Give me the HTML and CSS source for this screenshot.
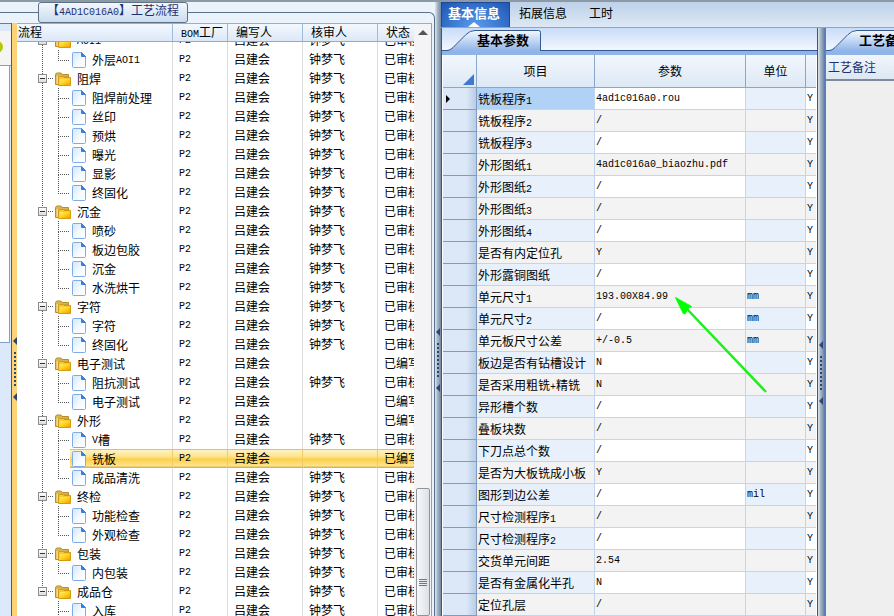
FILE: index.html
```html
<!DOCTYPE html>
<html lang="zh-CN">
<head>
    <meta charset="UTF-8">
    <meta name="viewport" content="width=device-width, initial-scale=1.0">
    <title>工艺流程</title>
    <link rel="stylesheet" href="styles.css">
</head>
<body>

<!-- 图标定义 -->
<svg class="defs" width="0" height="0" aria-hidden="true">
    <defs>
        <linearGradient id="gold" x1="0" y1="0" x2="1" y2="1">
            <stop offset="0" stop-color="#fff07a"/>
            <stop offset="0.5" stop-color="#ffd21e"/>
            <stop offset="1" stop-color="#f0a000"/>
        </linearGradient>
        <linearGradient id="paper" x1="0" y1="0" x2="1" y2="1">
            <stop offset="0" stop-color="#d3e6fb"/>
            <stop offset="0.6" stop-color="#f6fbff"/>
            <stop offset="1" stop-color="#ffffff"/>
        </linearGradient>
        <linearGradient id="tabfill" x1="0" y1="0" x2="0" y2="1">
            <stop offset="0" stop-color="#f4f8fe"/>
            <stop offset="0.45" stop-color="#c6daf6"/>
            <stop offset="1" stop-color="#8fb4e8"/>
        </linearGradient>
        <symbol id="folder" viewBox="0 0 16 14">
            <path d="M0.5 12.5V2.5L1.5 1H6l1 1.5h6.5V5H3.500V12.500z" fill="#d9b64c" stroke="#b88d2c"/>
            <path d="M1.500 4H3V12H1.500z" fill="#eddb9b"/>
            <path d="M3.500 13.500V5.500L4.500 4.500H8L9 5.500H15.500V13.500z" fill="#f7c92e" stroke="#d59a13"/>
            <path d="M5 7H15V13H4z" fill="url(#gold)"/>
        </symbol>
        <symbol id="file" viewBox="0 0 14 16">
            <path d="M0.500 1.500Q0.500 0.500 1.500 0.500H9.500L13.500 4.500V14.500Q13.500 15.500 12.500 15.500H1.500Q0.500 15.500 0.500 14.500z" fill="url(#paper)" stroke="#7fabe6"/>
            <path d="M9.500 0.500V4.500H13.500z" fill="#3d7fd8" stroke="#3d7fd8"/>
        </symbol>
    </defs>
</svg>

<div class="app">

    <!-- 左侧：工艺流程 -->
    <fieldset class="flow">
        <legend>【<span class="en">4AD1C016A0</span>】工艺流程</legend>
        <div class="flow-body">
            <div class="side">
                <div class="side-head"><i class="dot"></i></div>
                <div class="side-page"></div>
            </div>
            <div class="bar gold"><i class="arrow"></i><i class="grip"></i><i class="arrow"></i></div>

            <div class="tree">
                <table class="tree-head">
                    <colgroup><col class="c1"><col class="c2"><col class="c3"><col class="c3"><col></colgroup>
                    <thead>
                        <tr><th class="first">流程</th><th><span class="en">BOM</span>工厂</th><th>编写人</th><th>核审人</th><th>状态</th></tr>
                    </thead>
                </table>
                <div class="tree-view">
                    <div class="tree-rows">
                        <table class="tree-table">
                            <colgroup><col class="c1"><col class="c2"><col class="c3"><col class="c3"><col></colgroup>
                            <tbody>
                                <tr><td><div class="node group"><button class="toggle" aria-label="折叠"></button><svg class="folder"><use href="#folder"/></svg><span class="en">AOI1</span></div></td><td class="en">P2</td><td>吕建会</td><td>钟梦飞</td><td>已审核</td></tr>
                                <tr><td><div class="node"><i class="branch last"></i><span class="leaf"><svg class="file"><use href="#file"/></svg>外层<span class="en">AOI1</span></span></div></td><td class="en">P2</td><td>吕建会</td><td>钟梦飞</td><td>已审核</td></tr>
                                <tr><td><div class="node group"><button class="toggle" aria-label="折叠"></button><svg class="folder"><use href="#folder"/></svg>阻焊</div></td><td class="en">P2</td><td>吕建会</td><td>钟梦飞</td><td>已审核</td></tr>
                                <tr><td><div class="node"><i class="branch"></i><span class="leaf"><svg class="file"><use href="#file"/></svg>阻焊前处理</span></div></td><td class="en">P2</td><td>吕建会</td><td>钟梦飞</td><td>已审核</td></tr>
                                <tr><td><div class="node"><i class="branch"></i><span class="leaf"><svg class="file"><use href="#file"/></svg>丝印</span></div></td><td class="en">P2</td><td>吕建会</td><td>钟梦飞</td><td>已审核</td></tr>
                                <tr><td><div class="node"><i class="branch"></i><span class="leaf"><svg class="file"><use href="#file"/></svg>预烘</span></div></td><td class="en">P2</td><td>吕建会</td><td>钟梦飞</td><td>已审核</td></tr>
                                <tr><td><div class="node"><i class="branch"></i><span class="leaf"><svg class="file"><use href="#file"/></svg>曝光</span></div></td><td class="en">P2</td><td>吕建会</td><td>钟梦飞</td><td>已审核</td></tr>
                                <tr><td><div class="node"><i class="branch"></i><span class="leaf"><svg class="file"><use href="#file"/></svg>显影</span></div></td><td class="en">P2</td><td>吕建会</td><td>钟梦飞</td><td>已审核</td></tr>
                                <tr><td><div class="node"><i class="branch last"></i><span class="leaf"><svg class="file"><use href="#file"/></svg>终固化</span></div></td><td class="en">P2</td><td>吕建会</td><td>钟梦飞</td><td>已审核</td></tr>
                                <tr><td><div class="node group"><button class="toggle" aria-label="折叠"></button><svg class="folder"><use href="#folder"/></svg>沉金</div></td><td class="en">P2</td><td>吕建会</td><td>钟梦飞</td><td>已审核</td></tr>
                                <tr><td><div class="node"><i class="branch"></i><span class="leaf"><svg class="file"><use href="#file"/></svg>喷砂</span></div></td><td class="en">P2</td><td>吕建会</td><td>钟梦飞</td><td>已审核</td></tr>
                                <tr><td><div class="node"><i class="branch"></i><span class="leaf"><svg class="file"><use href="#file"/></svg>板边包胶</span></div></td><td class="en">P2</td><td>吕建会</td><td>钟梦飞</td><td>已审核</td></tr>
                                <tr><td><div class="node"><i class="branch"></i><span class="leaf"><svg class="file"><use href="#file"/></svg>沉金</span></div></td><td class="en">P2</td><td>吕建会</td><td>钟梦飞</td><td>已审核</td></tr>
                                <tr><td><div class="node"><i class="branch last"></i><span class="leaf"><svg class="file"><use href="#file"/></svg>水洗烘干</span></div></td><td class="en">P2</td><td>吕建会</td><td>钟梦飞</td><td>已审核</td></tr>
                                <tr><td><div class="node group"><button class="toggle" aria-label="折叠"></button><svg class="folder"><use href="#folder"/></svg>字符</div></td><td class="en">P2</td><td>吕建会</td><td>钟梦飞</td><td>已审核</td></tr>
                                <tr><td><div class="node"><i class="branch"></i><span class="leaf"><svg class="file"><use href="#file"/></svg>字符</span></div></td><td class="en">P2</td><td>吕建会</td><td>钟梦飞</td><td>已审核</td></tr>
                                <tr><td><div class="node"><i class="branch last"></i><span class="leaf"><svg class="file"><use href="#file"/></svg>终固化</span></div></td><td class="en">P2</td><td>吕建会</td><td>钟梦飞</td><td>已审核</td></tr>
                                <tr><td><div class="node group"><button class="toggle" aria-label="折叠"></button><svg class="folder"><use href="#folder"/></svg>电子测试</div></td><td class="en">P2</td><td>吕建会</td><td></td><td>已编写</td></tr>
                                <tr><td><div class="node"><i class="branch"></i><span class="leaf"><svg class="file"><use href="#file"/></svg>阻抗测试</span></div></td><td class="en">P2</td><td>吕建会</td><td>钟梦飞</td><td>已审核</td></tr>
                                <tr><td><div class="node"><i class="branch last"></i><span class="leaf"><svg class="file"><use href="#file"/></svg>电子测试</span></div></td><td class="en">P2</td><td>吕建会</td><td></td><td>已编写</td></tr>
                                <tr><td><div class="node group"><button class="toggle" aria-label="折叠"></button><svg class="folder"><use href="#folder"/></svg>外形</div></td><td class="en">P2</td><td>吕建会</td><td></td><td>已编写</td></tr>
                                <tr><td><div class="node"><i class="branch"></i><span class="leaf"><svg class="file"><use href="#file"/></svg><span class="en">V</span>槽</span></div></td><td class="en">P2</td><td>吕建会</td><td>钟梦飞</td><td>已审核</td></tr>
                                <tr class="selected"><td><div class="node"><i class="branch"></i><span class="leaf"><svg class="file"><use href="#file"/></svg>铣板</span></div></td><td class="en">P2</td><td>吕建会</td><td></td><td>已编写</td></tr>
                                <tr><td><div class="node"><i class="branch last"></i><span class="leaf"><svg class="file"><use href="#file"/></svg>成品清洗</span></div></td><td class="en">P2</td><td>吕建会</td><td>钟梦飞</td><td>已审核</td></tr>
                                <tr><td><div class="node group"><button class="toggle" aria-label="折叠"></button><svg class="folder"><use href="#folder"/></svg>终检</div></td><td class="en">P2</td><td>吕建会</td><td>钟梦飞</td><td>已审核</td></tr>
                                <tr><td><div class="node"><i class="branch"></i><span class="leaf"><svg class="file"><use href="#file"/></svg>功能检查</span></div></td><td class="en">P2</td><td>吕建会</td><td>钟梦飞</td><td>已审核</td></tr>
                                <tr><td><div class="node"><i class="branch last"></i><span class="leaf"><svg class="file"><use href="#file"/></svg>外观检查</span></div></td><td class="en">P2</td><td>吕建会</td><td>钟梦飞</td><td>已审核</td></tr>
                                <tr><td><div class="node group"><button class="toggle" aria-label="折叠"></button><svg class="folder"><use href="#folder"/></svg>包装</div></td><td class="en">P2</td><td>吕建会</td><td>钟梦飞</td><td>已审核</td></tr>
                                <tr><td><div class="node"><i class="branch last"></i><span class="leaf"><svg class="file"><use href="#file"/></svg>内包装</span></div></td><td class="en">P2</td><td>吕建会</td><td>钟梦飞</td><td>已审核</td></tr>
                                <tr><td><div class="node group"><button class="toggle" aria-label="折叠"></button><svg class="folder"><use href="#folder"/></svg>成品仓</div></td><td class="en">P2</td><td>吕建会</td><td>钟梦飞</td><td>已审核</td></tr>
                                <tr><td><div class="node"><i class="branch"></i><span class="leaf"><svg class="file"><use href="#file"/></svg>入库</span></div></td><td class="en">P2</td><td>吕建会</td><td>钟梦飞</td><td>已审核</td></tr>
                            </tbody>
                        </table>
                    </div>
                </div>
                <div class="scrollbar">
                    <i class="up"></i>
                    <div class="thumb"><i></i></div>
                </div>
            </div>
        </div>
    </fieldset>

    <div class="bar blue"><i class="arrow"></i><i class="grip"></i><i class="arrow"></i></div>

    <!-- 右侧：基本信息 -->
    <div class="info">
        <nav class="menu">
            <button class="active">基本信息</button>
            <button>拓展信息</button>
            <button>工时</button>
        </nav>

        <div class="panes">
            <div class="params">
                <div class="tabs">
                    <button class="tab">
                        <svg width="94" height="21" viewBox="0 0 94 21"><path d="M0 21V20.500Q3 20.500 6 17.500L19 4.500Q23 0.500 28 0.500H91.500Q93.500 0.500 93.500 2.500V21z" fill="url(#tabfill)"/><path d="M0 20.500Q3 20.500 6 17.500L19 4.500Q23 0.500 28 0.500H91.500Q93.500 0.500 93.500 2.500V21" fill="none" stroke="#35598f"/></svg>
                        <span>基本参数</span>
                    </button>
                </div>
                <table class="grid">
                    <colgroup><col class="g0"><col class="g1"><col><col class="g3"><col class="g4"></colgroup>
                    <thead>
                        <tr><th class="corner"></th><th>项目</th><th>参数</th><th>单位</th><th></th></tr>
                    </thead>
                    <tbody>
                        <tr class="current"><th></th><td>铣板程序<span class="en">1</span></td><td class="en">4ad1c016a0.rou</td><td class="en"></td><td class="en">Y</td></tr>
                        <tr><th></th><td>铣板程序<span class="en">2</span></td><td class="en">/</td><td class="en"></td><td class="en">Y</td></tr>
                        <tr><th></th><td>铣板程序<span class="en">3</span></td><td class="en">/</td><td class="en"></td><td class="en">Y</td></tr>
                        <tr><th></th><td>外形图纸<span class="en">1</span></td><td class="en">4ad1c016a0_biaozhu.pdf</td><td class="en"></td><td class="en">Y</td></tr>
                        <tr><th></th><td>外形图纸<span class="en">2</span></td><td class="en">/</td><td class="en"></td><td class="en">Y</td></tr>
                        <tr><th></th><td>外形图纸<span class="en">3</span></td><td class="en">/</td><td class="en"></td><td class="en">Y</td></tr>
                        <tr><th></th><td>外形图纸<span class="en">4</span></td><td class="en">/</td><td class="en"></td><td class="en">Y</td></tr>
                        <tr><th></th><td>是否有内定位孔</td><td class="en">Y</td><td class="en"></td><td class="en">Y</td></tr>
                        <tr><th></th><td>外形露铜图纸</td><td class="en">/</td><td class="en"></td><td class="en">Y</td></tr>
                        <tr><th></th><td>单元尺寸<span class="en">1</span></td><td class="en">193.00X84.99</td><td class="en">mm</td><td class="en">Y</td></tr>
                        <tr><th></th><td>单元尺寸<span class="en">2</span></td><td class="en">/</td><td class="en">mm</td><td class="en">Y</td></tr>
                        <tr><th></th><td>单元板尺寸公差</td><td class="en">+/-0.5</td><td class="en">mm</td><td class="en">Y</td></tr>
                        <tr><th></th><td>板边是否有钻槽设计</td><td class="en">N</td><td class="en"></td><td class="en">Y</td></tr>
                        <tr><th></th><td>是否采用粗铣<span class="en">+</span>精铣</td><td class="en">N</td><td class="en"></td><td class="en">Y</td></tr>
                        <tr><th></th><td>异形槽个数</td><td class="en">/</td><td class="en"></td><td class="en">Y</td></tr>
                        <tr><th></th><td>叠板块数</td><td class="en">/</td><td class="en"></td><td class="en">Y</td></tr>
                        <tr><th></th><td>下刀点总个数</td><td class="en">/</td><td class="en"></td><td class="en">Y</td></tr>
                        <tr><th></th><td>是否为大板铣成小板</td><td class="en">Y</td><td class="en"></td><td class="en">Y</td></tr>
                        <tr><th></th><td>图形到边公差</td><td class="en">/</td><td class="en">mil</td><td class="en">Y</td></tr>
                        <tr><th></th><td>尺寸检测程序<span class="en">1</span></td><td class="en">/</td><td class="en"></td><td class="en">Y</td></tr>
                        <tr><th></th><td>尺寸检测程序<span class="en">2</span></td><td class="en">/</td><td class="en"></td><td class="en">Y</td></tr>
                        <tr><th></th><td>交货单元间距</td><td class="en">2.54</td><td class="en"></td><td class="en">Y</td></tr>
                        <tr><th></th><td>是否有金属化半孔</td><td class="en">N</td><td class="en"></td><td class="en">Y</td></tr>
                        <tr><th></th><td>定位孔层</td><td class="en">/</td><td class="en"></td><td class="en">Y</td></tr>
                    </tbody>
                </table>
                <!-- 标注箭头 -->
                <svg class="pointer" width="94" height="98" viewBox="0 0 94 98"><path d="M12 12L91 95" stroke="#1cf01c" stroke-width="2.500"/><path d="M0.500 0.500L16.500 9.500L13.500 11L10 17L8 16z" fill="#00ff00" stroke="#00ff00"/></svg>
            </div>

            <div class="bar blue"><i class="arrow"></i><i class="grip"></i><i class="arrow"></i></div>

            <div class="notes">
                <div class="tabs">
                    <button class="tab">
                        <svg width="120" height="21" viewBox="0 0 120 21"><path d="M0 21V20.500Q3 20.500 6 17.500L19 4.500Q23 0.500 28 0.500H120V21z" fill="url(#tabfill)"/><path d="M0 20.500Q3 20.500 6 17.500L19 4.500Q23 0.500 28 0.500H120" fill="none" stroke="#35598f"/></svg>
                        <span>工艺备注</span>
                    </button>
                </div>
                <div class="notes-title">工艺备注</div>
            </div>
        </div>
    </div>
</div>

</body>
</html>
```

FILE: styles.css
```css
* {
    box-sizing: border-box;
}
body {
    margin: 0;
    font-family: "Noto Sans CJK SC", sans-serif;
    font-size: 12px;
    line-height: 18px;
    color: #000;
    background-color: #eaf2fb;
    overflow: hidden;
}
button {
    margin: 0;
    padding: 0;
    border: none;
    background: none;
    font: inherit;
    color: inherit;
}
table {
    border-collapse: separate;
    border-spacing: 0;
    table-layout: fixed;
    width: 100%;
}
th, td {
    padding: 0;
    font-weight: normal;
    text-align: left;
    white-space: nowrap;
    overflow: hidden;
}
i {
    display: block;
}
.defs {
    position: absolute;
}
/* 英文数字用等宽字体 */
.en {
    font-family: "Liberation Mono", monospace;
    font-size: 10px;
}
span.en {
    line-height: 1;
}
.app {
    display: flex;
    height: 100vh;
    border-top: 2px solid #8c9aa5;
}

/* 工艺流程 */
.flow {
    flex: 0 0 435px;
    min-width: 0;
    margin: 0;
    padding: 0 2px 0 0;
    border: 1px solid #5d7186;
    border-left: none;
    border-bottom: none;
    border-top-right-radius: 6px;
}
.flow legend {
    height: 21px;
    margin-left: 38px;
    padding: 0 8px;
    border: 1px solid #5d7186;
    border-radius: 3px;
    background: linear-gradient(#f2f7fc, #cbdcf0);
    color: #1e3272;
    line-height: 14px;
}
.flow-body {
    display: flex;
    height: calc(100vh - 23px);
}
.side {
    flex: 0 0 11px;
    background-color: #dce9fb;
    border-top: 1px solid #5b7fb5;
}
.side-head {
    height: 42px;
    padding-top: 17px;
    background: linear-gradient(#dbe8f8 0 7px, #f4f4f4 7px);
    border-bottom: 1px solid #7f9fce;
    overflow: hidden;
}
.dot {
    width: 12px;
    height: 12px;
    margin-left: -9px;
    border-radius: 50%;
    background-color: #b5c800;
}
.side-page {
    width: 10px;
    height: 277px;
    background-color: #fff;
    border-right: 1px solid #7f9fce;
    border-bottom: 1px solid #7f9fce;
}

/* 分隔条 */
.bar {
    flex: none;
    display: flex;
    flex-direction: column;
    align-items: center;
    justify-content: center;
    gap: 7px;
}
.bar.gold {
    width: 6px;
    padding-top: 98px;
    background-color: #fdd378;
    border-left: 1px solid #3b5f98;
}
.bar.blue {
    width: 6px;
    padding-top: 101px;
    background: linear-gradient(90deg, #dfe8f2, #a9b8c8 40%, #71879f);
}
.arrow {
    border: 4px solid transparent;
    border-right: 4px solid #2e4674;
    border-left: none;
}
.grip {
    width: 2px;
    height: 34px;
    background: repeating-linear-gradient(#2e4674 0 2px, transparent 2px 4px);
}

/* 流程树 */
.tree {
    flex: 1;
    min-width: 0;
    display: grid;
    grid-template-columns: 1fr 17px;
    grid-template-rows: 19px 1fr;
    background-color: #fff;
    border-right: 1px solid #8aa3c0;
}
.tree-head {
    grid-area: 1 / 1 / 2 / 3;
    border-top: 1px solid #8fb0d8;
    border-bottom: 1px solid #93abc8;
    background: linear-gradient(#f3f8fe, #dce8f7);
}
.tree-head th {
    height: 17px;
    padding-left: 8px;
    line-height: 16px;
    vertical-align: top;
    border-right: 1px solid #a3bad6;
}
.tree-head th.first {
    padding-left: 1px;
}
.tree-head th:last-child {
    border-right: none;
}
.c1 { width: 156px; }
.c2 { width: 55px; }
.c3 { width: 75px; }
.tree-view {
    overflow: hidden;
}
/* 列表已滚动，首行只露出一部分 */
.tree-rows {
    margin-top: -11px;
}
.tree-table {
    background: repeating-linear-gradient(#555 0 1px, transparent 1px 2px) 25px 0 / 1px 560px no-repeat;
}
.tree-table td {
    height: 19px;
    padding-left: 6px;
    line-height: 17px;
    vertical-align: top;
    border-right: 1px solid #dcdcdc;
}
.tree-table td.en {
    line-height: 19px;
}
.tree-table td:first-child {
    padding-left: 0;
}
.tree-table td:last-child {
    border-right: none;
}
.node {
    display: flex;
    align-items: center;
    height: 19px;
    line-height: 19px;
}
.node .en {
    padding-top: 2px;
}
.group {
    background: repeating-linear-gradient(90deg, #555 0 1px, transparent 1px 2px) 31px 9px / 6px 1px no-repeat;
}
.toggle {
    width: 9px;
    height: 9px;
    margin-left: 21px;
    border: 1px solid #8c8c8c;
    background: linear-gradient(#333, #333) center / 5px 1px no-repeat, linear-gradient(#fff, #ddd);
}
.folder {
    width: 16px;
    height: 14px;
    margin: 0 6px 0 8px;
}
.file {
    width: 14px;
    height: 16px;
    margin: 0 6px 0 2px;
}
.branch {
    width: 12px;
    margin-left: 41px;
}
.branch::before {
    content: "";
    display: block;
    width: 10px;
    height: 10px;
    border-left: 1px dotted #555;
    border-bottom: 1px dotted #555;
}
.branch::after {
    content: "";
    display: block;
    height: 9px;
    border-left: 1px dotted #555;
}
.branch.last::after {
    border-left: none;
}
.leaf {
    flex: 1;
    display: flex;
    align-items: center;
    height: 19px;
}
.selected .leaf,
.selected td:not(:first-child) {
    background: linear-gradient(#e8c251 0 1px, #fff3c4 1px, #fde38c 40%, #fdd04b 55%, #fee591 17px, #dfb448 18px);
}
.selected td {
    border-right-color: #f0cb62;
}
.scrollbar {
    grid-area: 1 / 2 / 3 / 3;
    display: flex;
    flex-direction: column;
    align-items: center;
    background: linear-gradient(transparent 0 1px, #f4f4f6 1px);
}
.up {
    margin-top: 7px;
    border: 5px solid transparent;
    border-top: none;
    border-bottom: 5px solid #555;
}
.thumb {
    width: 14px;
    height: 180px;
    margin-top: 453px;
    padding: 90px 2px 0;
    border: 1px solid #8f959c;
    border-radius: 2px;
    background: linear-gradient(90deg, #f7f8fa, #dde1e7);
}
.thumb i {
    height: 7px;
    background: repeating-linear-gradient(#777 0 1px, transparent 1px 2px);
}

/* 基本信息 */
.info {
    flex: 1;
    min-width: 0;
    display: flex;
    flex-direction: column;
}
.menu {
    display: flex;
    height: 26px;
    border-bottom: 1px solid #93a5ba;
    background: linear-gradient(#bdd1e9, #dde8f4);
}
.menu button {
    padding: 0 9px 4px;
    margin-right: 4px;
    line-height: 19px;
}
.menu .active {
    display: flex;
    flex-direction: column;
    align-items: center;
    padding: 0 9px 0 6px;
    margin-right: 0;
    border: 1px solid #1a4a9c;
    border-bottom: none;
    background: radial-gradient(at 50% 100%, #5b9cec, #1d56b4);
    color: #fff;
    font-size: 13px;
    font-weight: bold;
}
.menu .active::after {
    content: "";
    border: 6px solid transparent;
    border-top: none;
    border-bottom: 5px solid #fff;
}
.panes {
    flex: 1;
    display: flex;
    min-height: 0;
}
.params {
    position: relative;
    flex: 0 0 377px;
    border-left: 1px solid #35598f;
    border-right: 1px solid #35598f;
    overflow: hidden;
    background-color: #8fb4e8;
}
.tabs {
    height: 27px;
    padding: 2px 0 0 5px;
    border-bottom: 4px solid #8fb4e8;
    background: linear-gradient(#35598f, #35598f) 0 22px / 100% 1px no-repeat, linear-gradient(#c9dcf8, #f4f8fe);
    overflow: hidden;
}
.tab {
    display: grid;
    font-size: 13px;
    font-weight: bold;
    line-height: 20px;
}
.tab svg,
.tab span {
    grid-area: 1 / 1;
}
.tab span {
    padding-left: 30px;
    text-align: left;
}
.grid {
    padding: 0 1px;
    background-color: #fff;
}
.g0 { width: 34px; }
.g1 { width: 118px; }
.g3 { width: 60px; }
.g4 { width: 10px; }
.grid thead th {
    height: 33px;
    border-right: 1px solid #8aa6ca;
    border-bottom: 1px solid #8aa6ca;
    background: linear-gradient(#f2f7fd, #dde8f5);
    text-align: center;
}
.grid thead th:last-child {
    border-right: none;
}
.grid thead .corner::after {
    content: "";
    display: block;
    width: 11px;
    height: 11px;
    margin: 17px 0 0 20px;
    background-color: #3f78cc;
    clip-path: polygon(100% 0, 100% 100%, 0 100%);
}
.grid tbody th {
    border-right: 1px solid #7f9dc0;
    border-bottom: 1px solid #7f9dc0;
    background: linear-gradient(90deg, #dce8f7 70%, #b9cde6);
}
.grid tbody td {
    height: 22px;
    padding-left: 1px;
    line-height: 20px;
    border-right: 1px solid #c3d5ed;
    border-bottom: 1px solid #c3d5ed;
}
.grid tbody td.en {
    padding-top: 1px;
}
.grid tbody td:last-child {
    border-right: none;
}
.grid tbody tr:nth-child(even) td {
    background-color: #f3f3f3;
}
.grid tbody tr:nth-child(odd) td:nth-child(2),
.grid tbody tr:nth-child(odd) td:nth-child(4) {
    background-color: #e8f1fb;
}
.grid tbody tr.current:nth-child(odd) td:nth-child(2) {
    background-color: #afd2f6;
}
.current th::before {
    content: "";
    display: block;
    width: 4px;
    margin-left: 3px;
    border: 4px solid transparent;
    border-left: 4px solid #000;
    border-right: none;
}
.pointer {
    position: absolute;
    left: 233px;
    top: 269px;
}
.notes {
    flex: 1;
    min-width: 0;
    overflow: hidden;
    border-left: 2px solid #5b7fb5;
    background-color: #efefef;
}
.notes .tabs {
    padding-left: 3px;
}
.notes-title {
    height: 26px;
    padding-left: 2px;
    line-height: 24px;
    color: #1e3272;
    background: linear-gradient(#f1f6fc, #dde7f2);
    border-bottom: 2px solid #7d8b99;
}
```
